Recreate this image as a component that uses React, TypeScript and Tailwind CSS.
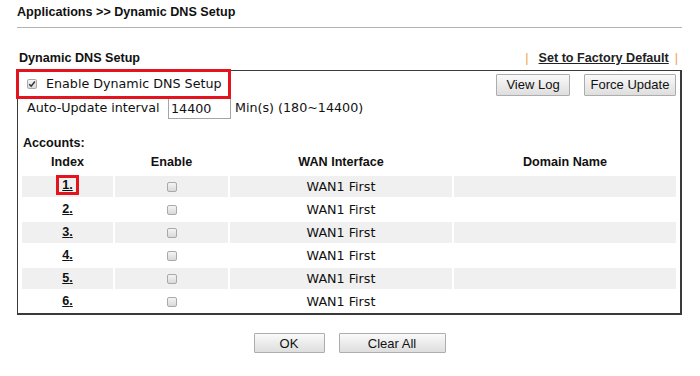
import React from 'react'

const arial = "font-['Liberation_Sans',Arial,sans-serif]"
const verdana = "font-['DejaVu_Sans',Verdana,sans-serif]"

const rows = [1, 2, 3, 4, 5, 6]

function Box({ checked = false }: { checked?: boolean }) {
  return (
    <span className="inline-flex w-[10px] h-[10px] items-center justify-center rounded-[2px] border border-[#a9a9a9] bg-gradient-to-b from-[#f4f4f4] to-[#d9d9d9]">
      {checked && (
        <svg viewBox="0 0 10 10" className="w-[8px] h-[8px]">
          <path d="M1.5 5.2 L4 7.6 L8.6 1.8" fill="none" stroke="#333" strokeWidth="1.8" />
        </svg>
      )}
    </span>
  )
}

function Btn({ label, w }: { label: string; w: string }) {
  return (
    <button type="button" className={`${w} h-[22px] border border-[#adadad] rounded-[1px] bg-gradient-to-b from-[#fafafa] to-[#dedede] text-[13px] text-[#111] leading-none ${arial}`}>
      {label}
    </button>
  )
}

export default function App() {
  return (
    <div className={`w-[700px] h-[376px] bg-white text-[#111] pt-[5px] pl-[17px] ${arial}`}>
      <div className="w-[665px]">
        <div className="text-[12.6px] font-bold leading-[15px] pb-[7px] border-b border-[#b4b4b4]">Applications &gt;&gt; Dynamic DNS Setup</div>

        <div className="mt-[23px] h-[19px] flex items-start justify-between pl-[2px] pr-[4px]">
          <div className="text-[12.6px] font-bold leading-[15px]">Dynamic DNS Setup</div>
          <div className="flex items-center text-[12.6px] font-bold leading-[15px]">
            <span className="text-[#f0a040] font-normal">|</span>
            <a className="ml-[10px] mr-[6px] underline text-[#222]">Set to Factory Default</a>
            <span className="text-[#f0a040] font-normal">|</span>
          </div>
        </div>

        <div className="relative border-t border-l border-r-2 border-b-2 border-[#3a3a3a] pb-[1px]">
          <div className="absolute left-[-2px] top-[-2px] w-[215px] h-[30px] border-[3px] border-[#e3141e]" />

          <div className="h-[26px] flex items-center justify-between pr-[4px]">
            <label className={`flex items-center pl-[9px] text-[12.7px] ${verdana}`}>
              <Box checked />
              <span className="ml-[9px]">Enable Dynamic DNS Setup</span>
            </label>
            <div className="flex gap-[14px] mt-[1px]">
              <Btn label="View Log" w="w-[74px]" />
              <Btn label="Force Update" w="w-[92px]" />
            </div>
          </div>

          <div className={`h-[23px] flex items-start pl-[9px] text-[12.7px] ${verdana}`}>
            <span className="w-[141px] leading-[22px]">Auto-Update interval</span>
            <input readOnly value="14400" className="w-[63px] h-[22px] border border-[#a5a5a5] px-[2px] text-[12.7px] outline-none" />
            <span className="ml-[4px] leading-[22px]">Min(s) (180~14400)</span>
          </div>

          <div className="mt-[16px] pl-[5px] text-[12.6px] font-bold leading-[15px]">Accounts:</div>

          <div className="mt-[4px] px-[4px] grid grid-cols-[91px_113px_222px_222px] gap-[2px] text-[12.6px]">
            <div className="h-[19px] font-bold text-center leading-[15px]">Index</div>
            <div className="h-[19px] font-bold text-center leading-[15px]">Enable</div>
            <div className="h-[19px] font-bold text-center leading-[15px]">WAN Interface</div>
            <div className="h-[19px] font-bold text-center leading-[15px]">Domain Name</div>
            {rows.map((n) => {
              const bg = n % 2 === 1 ? 'bg-[#f0f0f0]' : 'bg-white'
              return (
                <React.Fragment key={n}>
                  <div className={`h-[21px] ${bg} flex items-center justify-center font-bold`}>
                    {n === 1 ? (
                      <span className="border-[3px] border-[#e3141e] px-[3px] leading-[14px] underline mt-[-3px]">1.</span>
                    ) : (
                      <a className="underline">{n}.</a>
                    )}
                  </div>
                  <div className={`h-[21px] ${bg} flex items-center justify-center`}>
                    <Box />
                  </div>
                  <div className={`h-[21px] ${bg} flex items-center justify-center text-[12.7px] ${verdana}`}>WAN1 First</div>
                  <div className={`h-[21px] ${bg}`} />
                </React.Fragment>
              )
            })}
          </div>
        </div>

        <div className="mt-[18px] flex justify-center gap-[14px]">
          <Btn label="OK" w="w-[71px] !h-[20px]" />
          <Btn label="Clear All" w="w-[107px] !h-[20px]" />
        </div>
      </div>
    </div>
  )
}
